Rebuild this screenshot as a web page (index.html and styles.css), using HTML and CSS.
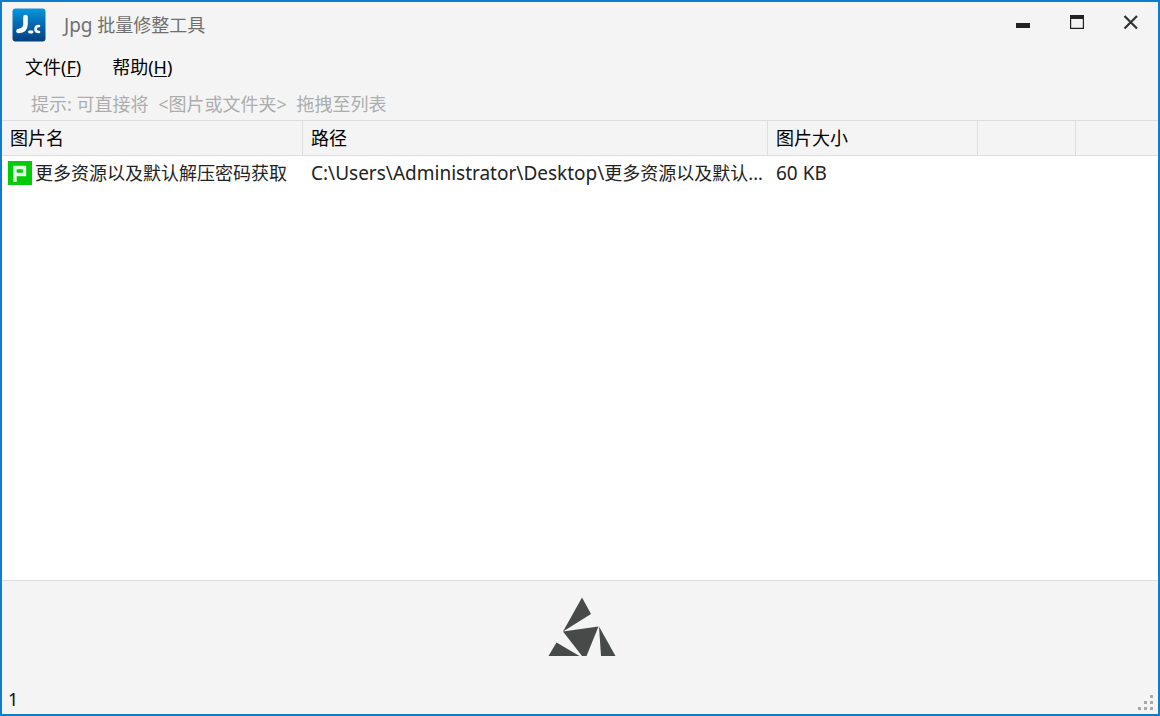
FILE: index.html
```html
<!DOCTYPE html>
<html lang="zh-CN">
<head>
<meta charset="utf-8">
<title>Jpg 批量修整工具</title>
<link rel="stylesheet" href="styles.css">
</head>
<body>
<div class="window">
  <header class="titlebar">
    <svg class="app-icon" viewBox="0 0 34 34" aria-hidden="true">
      <defs>
        <linearGradient id="blue" x1="0" y1="0" x2="0" y2="1">
          <stop offset="0" stop-color="#0797dc"/>
          <stop offset="0.5" stop-color="#0567ae"/>
          <stop offset="1" stop-color="#033f7c"/>
        </linearGradient>
      </defs>
      <rect x="0.5" y="0.5" width="33" height="33" rx="3" fill="url(#blue)"/>
      <g fill="none" stroke="#fff" stroke-linecap="round" stroke-linejoin="round">
        <path d="M13.500 9V16Q13.500 22.500 6.500 23" stroke-width="4.600"/>
        <path d="M17.500 24H20" stroke-width="2.800"/>
        <path d="M27 18Q23.500 18 23.500 21Q23.500 24 27 24" stroke-width="2.600"/>
      </g>
    </svg>
    <h1 class="title"><span class="latin">Jpg</span> 批量修整工具</h1>
    <div class="controls">
      <button class="control" aria-label="最小化">
        <svg viewBox="0 0 16 16"><rect x="1" y="9" width="14" height="5" fill="#202223"/></svg>
      </button>
      <button class="control" aria-label="最大化">
        <svg viewBox="0 0 16 16"><path d="M1 1H15V15H1ZM2.200 5V13.800H13.800V5Z" fill="#202223" fill-rule="evenodd"/></svg>
      </button>
      <button class="control" aria-label="关闭">
        <svg viewBox="0 0 16 16"><path d="M1.500 2L14 14.500M14 2L1.500 14.500" stroke="#303233" stroke-width="2.200"/></svg>
      </button>
    </div>
  </header>
  <nav class="menubar">
    <button class="menu">文件(<u>F</u>)</button>
    <button class="menu">帮助(<u>H</u>)</button>
  </nav>
  <p class="tip">提示: 可直接将 <span class="target">&lt;图片或文件夹&gt;</span> 拖拽至列表</p>
  <main class="list">
    <table class="files">
      <colgroup>
        <col class="col-name"><col class="col-path"><col class="col-size"><col class="col-extra"><col>
      </colgroup>
      <thead>
        <tr><th>图片名</th><th>路径</th><th>图片大小</th><th></th><th></th></tr>
      </thead>
      <tbody>
        <tr>
          <td><div class="name">
            <svg class="file-icon" viewBox="0 0 24 24" aria-hidden="true">
              <rect width="24" height="24" fill="#00cc08"/>
              <path d="M7 21V6.500H16.500V13.500H7" fill="none" stroke="#e8fbe8" stroke-width="3.400"/>
            </svg>
            <span>更多资源以及默认解压密码获取</span>
          </div></td>
          <td><span class="latin">C:\Users\Administrator\Desktop\</span>更多资源以及默认...</td>
          <td><span class="latin">60 KB</span></td>
          <td></td>
          <td></td>
        </tr>
      </tbody>
    </table>
  </main>
  <footer class="footer">
    <svg class="logo" viewBox="0 0 68 60" aria-hidden="true">
      <g fill="#484a49">
        <path d="M34 0.500L43 17L15 34.500Z"/>
        <path d="M15 34.500L50.500 29.500L38.500 59H34Z"/>
        <path d="M51 29.500L67.500 59H53Z"/>
        <path d="M8.500 45.500L31.500 59H0.500Z"/>
      </g>
    </svg>
    <div class="status">
      <span>1</span>
      <svg class="grip" viewBox="0 0 18 18" aria-hidden="true">
        <g fill="#a8a8a8">
          <rect x="13" y="1" width="3" height="3"/>
          <rect x="7" y="7" width="3" height="3"/>
          <rect x="13" y="7" width="3" height="3"/>
          <rect x="1" y="13" width="3" height="3"/>
          <rect x="7" y="13" width="3" height="3"/>
          <rect x="13" y="13" width="3" height="3"/>
        </g>
      </svg>
    </div>
  </footer>
</div>
</body>
</html>
```
FILE: styles.css
```css
* { box-sizing: border-box; }

body {
  margin: 0;
  background: #f4f4f4;
  color: #111;
  font: 18px/24px "Noto Sans", "Noto Sans CJK SC", sans-serif;
}

.window {
  display: flex;
  flex-direction: column;
  min-height: 100vh;
  border: 2px solid #0f7dcb;
}

.latin { font-size: 19px; }

.titlebar {
  display: flex;
  align-items: center;
  height: 46px;
  padding-left: 10px;
}

.app-icon { width: 34px; height: 34px; }

.title {
  margin: 0 0 0 18px;
  color: #707070;
  font-size: 18px;
  font-weight: 400;
}

.controls {
  display: flex;
  align-self: flex-start;
  margin-left: auto;
}

.control {
  display: flex;
  align-items: center;
  justify-content: center;
  width: 54px;
  height: 40px;
  padding: 0;
  border: 0;
  background: none;
}

.control svg { width: 16px; height: 16px; }

.menubar {
  display: flex;
  gap: 15px;
  height: 38px;
  padding: 0 15px;
}

.menu {
  padding: 0 8px;
  border: 0;
  background: none;
  color: #000;
  font: inherit;
}

.menu u { text-underline-offset: 2px; }

.tip {
  margin: 0;
  padding: 6px 29px 4px;
  color: #adadad;
}

.target { margin: 0 5px; }

.list {
  flex: 1;
  border-top: 1px solid #dedede;
  background: #fff;
}

.files {
  width: 100%;
  border-collapse: separate;
  border-spacing: 0;
  table-layout: fixed;
}

.col-name { width: 301px; }
.col-path { width: 465px; }
.col-size { width: 210px; }
.col-extra { width: 98px; }

.files th {
  height: 35px;
  padding: 0 8px;
  border-right: 1px solid #dedede;
  border-bottom: 1px solid #dedede;
  background: #f4f4f4;
  color: #000;
  font-weight: 400;
  text-align: left;
}

.files th:last-child { border-right: 0; }

.files td {
  height: 33px;
  padding: 0 8px;
  color: #222;
  white-space: nowrap;
}

.files td:first-child { padding: 0 6px; }

.name {
  display: flex;
  align-items: center;
  gap: 3px;
}

.file-icon { width: 24px; height: 24px; }

.footer {
  display: flex;
  flex-direction: column;
  align-items: center;
  gap: 27px;
  padding-top: 16px;
  border-top: 1px solid #dedede;
}

.logo { width: 68px; height: 60px; margin-left: 3px; }

.status {
  display: flex;
  align-items: center;
  justify-content: space-between;
  width: 100%;
  height: 30px;
  padding: 0 3px 0 6px;
}

.grip { align-self: flex-end; width: 18px; height: 18px; margin-bottom: 2px; }
```
